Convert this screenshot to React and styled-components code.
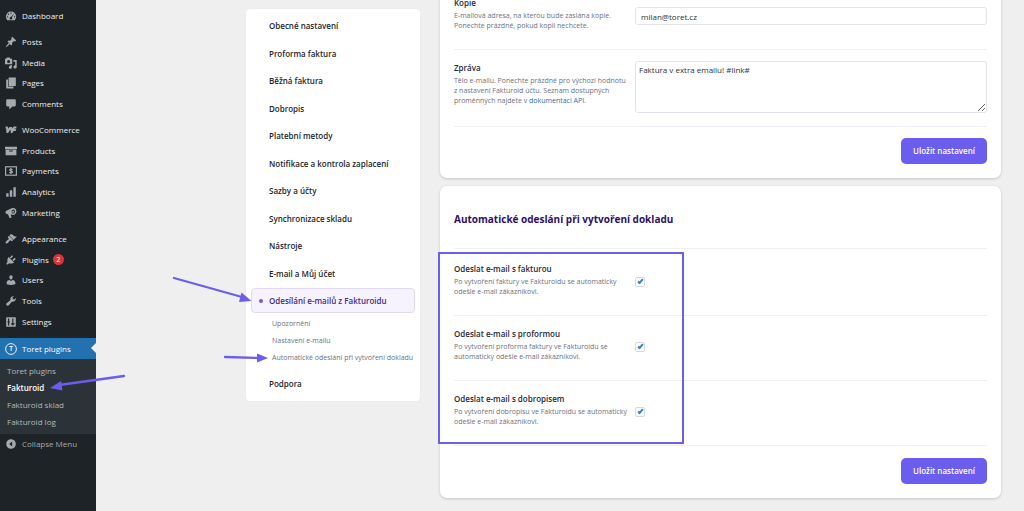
import React from "react";
import styled, { createGlobalStyle, css } from "styled-components";

const GlobalStyle = createGlobalStyle`
  *, *::before, *::after {
    box-sizing: border-box;
  }

  body {
    margin: 0;
    background: #efefef;
    color: #2c3338;
    font-family: "Open Sans", "Noto Sans", sans-serif;
    font-size: 8px;
  }

  a {
    text-decoration: none;
  }
`;

const Page = styled.div`
  position: relative;
  display: flex;
  min-height: 100vh;
  overflow: hidden;
`;

const Sidebar = styled.nav`
  flex: 0 0 96px;
  padding-top: 5px;
  background: #1d2327;
`;

const MenuGroup = styled.div`
  display: grid;
  grid-auto-rows: 1fr;
  height: ${({ $height }) => $height}px;
  margin-bottom: 6px;
`;

const MenuLink = styled.a`
  display: flex;
  align-items: center;
  gap: 5px;
  padding-left: 5px;
  line-height: 12px;
  color: #f0f0f1;

  svg {
    width: 12px;
    height: 12px;
    color: #a7aaad;
  }
`;

const CurrentLink = styled(MenuLink)`
  position: relative;
  height: 21px;
  background: #2271b1;
  color: white;

  svg {
    color: white;
  }

  &::after {
    content: "";
    position: absolute;
    right: 0;
    top: 5px;
    border: 5px solid transparent;
    border-left: 0;
    border-right-color: #efefef;
  }
`;

const CountBadge = styled.span`
  width: 11px;
  height: 11px;
  margin-left: -1px;
  border-radius: 50%;
  background: #d63638;
  color: white;
  font-size: 7px;
  line-height: 11px;
  text-align: center;
`;

const Submenu = styled.div`
  padding: 3px 0 4px;
  background: #2c3338;
`;

const SubmenuLink = styled.a`
  display: block;
  padding-left: 7px;
  line-height: 17px;
  color: ${({ $current }) => ($current ? "white" : "#b4b7ba")};
  font-weight: ${({ $current }) => ($current ? 600 : 400)};
`;

const CollapseButton = styled.button`
  display: flex;
  align-items: center;
  gap: 5px;
  width: 100%;
  height: 19px;
  padding: 0 0 0 5px;
  border: 0;
  background: none;
  color: #a7aaad;
  font: inherit;
  cursor: pointer;

  svg {
    width: 12px;
    height: 12px;
  }
`;

const Content = styled.main`
  display: flex;
  flex: 1;
  align-items: flex-start;
  gap: 20px;
  min-width: 0;
  padding: 9px 23px 0 150px;
`;

const Tabs = styled.nav`
  flex: 0 0 174px;
  padding: 4px 5px 5px;
  border-radius: 4px;
  background: white;
  box-shadow: 0 0 2px rgba(0, 0, 0, 0.05);
`;

const TabList = styled.div`
  display: flex;
  flex-direction: column;
  justify-content: space-between;
  height: 300px;
`;

const Tab = styled.a`
  display: flex;
  align-items: center;
  height: 25px;
  padding-left: 17px;
  border: 1px solid transparent;
  border-radius: 4px;
  color: #23262b;
  font-weight: 600;

  ${({ $active }) =>
    $active &&
    css`
      padding-left: 7px;
      border-color: #e0d8fb;
      background: #f6f3fe;
      color: #4b2a86;

      &::before {
        content: "";
        width: 4px;
        height: 4px;
        margin-right: 6px;
        border-radius: 50%;
        background: #6b5ded;
      }
    `}
`;

const SectionList = styled.div`
  display: flex;
  flex-direction: column;
  padding: 2px 0 5px 21px;
`;

const SectionLink = styled.a`
  color: #6b7280;
  font-size: 7px;
  line-height: 17px;
  white-space: nowrap;
`;

const Cards = styled.div`
  display: flex;
  flex: 1;
  flex-direction: column;
  gap: 8px;
  min-width: 0;
  margin-top: -38px;
`;

const Card = styled.section`
  padding: 14px;
  border-radius: 7px;
  background: white;
  box-shadow: 0 1px 3px rgba(0, 0, 0, 0.18);
`;

const CardTitle = styled.h2`
  margin: 0;
  padding: 12px 0 21px;
  border-bottom: 1px solid #eeeff1;
  color: #2f0f68;
  font-size: 10px;
  font-weight: 700;
  line-height: 15px;
`;

const Rows = styled.div`
  position: relative;
  padding: 2px 0 1px;
`;

const FieldRow = styled.div`
  display: grid;
  grid-template-columns: 169px 1fr;
  align-items: center;
  gap: 12px;
  padding: 11px 0 13px;
  border-bottom: 1px solid #eeeff1;
`;

const FieldText = styled.div`
  align-self: start;
`;

const FieldLabel = styled.label`
  display: block;
  color: #1f2937;
  font-weight: 600;
  line-height: 14px;
`;

const Hint = styled.p`
  margin: 1px 0 5px;
  color: #6b7280;
  font-size: 7px;
  line-height: 10px;
  white-space: nowrap;

  a {
    color: #2271b1;
  }
`;

const controlStyles = css`
  display: block;
  width: 100%;
  border: 1px solid #e3e4ea;
  border-radius: 3px;
  outline: 0;
  background: white;
  color: #2c3338;
  font: inherit;
`;

const TextInput = styled.input`
  ${controlStyles}
  height: 18px;
  padding: 0 5px;
`;

const TextArea = styled.textarea`
  ${controlStyles}
  height: 52px;
  padding: 2px 3px;
  line-height: 12px;
  resize: vertical;
`;

const Checkbox = styled.input`
  position: relative;
  appearance: none;
  width: 10px;
  height: 10px;
  margin: 0;
  border: 1px solid #d5d9e1;
  border-radius: 2px;
  background: white;

  &:checked::before {
    content: "";
    position: absolute;
    left: 3px;
    top: 0;
    width: 3px;
    height: 6px;
    border: solid #3582c4;
    border-width: 0 2px 2px 0;
    transform: rotate(42deg);
  }
`;

const CardFooter = styled.div`
  display: flex;
  justify-content: flex-end;
  padding-top: 11px;
`;

const SaveButton = styled.button`
  width: 86px;
  height: 26px;
  padding: 0 0 2px;
  border: 0;
  border-radius: 5px;
  background: #6b5ded;
  color: white;
  font: inherit;
  font-weight: 600;
  cursor: pointer;
`;

const Highlight = styled.div`
  position: absolute;
  top: 3px;
  bottom: 3px;
  left: -16px;
  width: 246px;
  border: 2px solid #6b5ded;
  pointer-events: none;
`;

const Arrows = styled.svg`
  position: absolute;
  top: 0;
  left: 0;
  pointer-events: none;
`;

const Icon = ({ children }) => (
  <svg viewBox="0 0 20 20" fill="currentColor" aria-hidden="true">
    {children}
  </svg>
);

const icons = {
  dashboard: (
    <Icon>
      <path
        fillRule="evenodd"
        d="M3.800 17h12.400A8.600 8.600 0 0 0 18.500 11a8.500 8.500 0 0 0-17 0c0 2.400.900 4.400 2.300 6zM10 4.200a1.100 1.100 0 1 1 0 2.200 1.100 1.100 0 0 1 0-2.200zM5.600 6a1.100 1.100 0 1 1 0 2.200 1.100 1.100 0 0 1 0-2.200zM4 10.300a1.100 1.100 0 1 1 0 2.200 1.100 1.100 0 0 1 0-2.200zm12 0a1.100 1.100 0 1 1 0 2.200 1.100 1.100 0 0 1 0-2.200zM15 6l-3.400 6.400a2.200 2.200 0 1 1-1.600-.900z"
      />
    </Icon>
  ),
  posts: (
    <Icon>
      <path d="M10.440 3.020l1.820-1.820 6.360 6.350-1.830 1.820c-1.050-.680-2.480-.570-3.410.360l-.750.750c-.920.930-1.040 2.350-.350 3.410l-1.830 1.820-2.410-2.410-2.800 2.790c-.420.420-3.380 2.710-3.800 2.290s1.860-3.390 2.280-3.810l2.790-2.790L4.100 9.360l1.830-1.820c1.050.690 2.480.570 3.400-.360l.750-.750c.930-.920 1.050-2.350.360-3.410z" />
    </Icon>
  ),
  media: (
    <Icon>
      <path
        fillRule="evenodd"
        d="M0 3h2l1-2h5l1 2h3v9H0zm6 2a2.500 2.500 0 1 0 0 5 2.500 2.500 0 0 0 0-5zM14 5h5.500v11.500a2.700 2.700 0 1 1-2.500-2.600V8h-3zM11.500 13.500V17A2.600 2.600 0 1 1 9 14.500v-1z"
      />
    </Icon>
  ),
  pages: (
    <Icon>
      <path d="M6 15V1h12v14zm-1 1h9v3H2V4h3z" />
    </Icon>
  ),
  comments: (
    <Icon>
      <path d="M4 2h12c1.100 0 2 .900 2 2v8c0 1.100-.900 2-2 2h-3.500L7 19v-5H4c-1.100 0-2-.900-2-2V4c0-1.100.900-2 2-2z" />
    </Icon>
  ),
  woo: (
    <Icon>
      <path
        d="M1 6h2.500l.5 7.500L8.500 6.500h2l.8 7L15 6h4M14.500 10h3.500"
        fill="none"
        stroke="currentColor"
        strokeWidth="3.400"
        strokeLinejoin="round"
      />
    </Icon>
  ),
  products: (
    <Icon>
      <path fillRule="evenodd" d="M0 3h20v4H0zm1 5h18v9H1zm6 1v2h6V9z" />
    </Icon>
  ),
  payments: (
    <Icon>
      <rect x="1" y="3" width="18" height="14" fill="none" stroke="currentColor" strokeWidth="2" />
      <path
        d="M12.500 8c-.5-1-4.500-1.500-4.500.3 0 2 4.500 1 4.500 3.200 0 2-4.200 1.700-5 .3M10 5v10"
        fill="none"
        stroke="currentColor"
        strokeWidth="2"
      />
    </Icon>
  ),
  analytics: (
    <Icon>
      <path d="M14 2h4v16h-4zM8 7h4v11H8zm-6 5h4v6H2z" />
    </Icon>
  ),
  marketing: (
    <Icon>
      <path
        fillRule="evenodd"
        d="M11 2c4.500-1.500 8.500 1.500 8 6C18.500 12 15 14 12 13l-2.500-.5 1.500 5.500-3.500.5L5 12l-2.500-.5C.5 10 .3 8 1.500 6.500zm2.500 2c-3.200 1-3.200 6.500 0 7 3.500-.5 4.500-6.500 0-7z"
      />
      <circle cx="13.500" cy="7.800" r="1.600" />
    </Icon>
  ),
  appearance: (
    <Icon>
      <path d="M14.480 11.060L7.410 3.990l1.500-1.500c.500-.560 2.300-.470 3.510.320 1.210.800 1.430 1.280 2.910 2.100 1.180.640 2.450 1.260 4.450.850zm-.710.710L6.700 4.700 4.930 6.470c-.390.390-.390 1.020 0 1.410l1.060 1.060c.390.390.390 1.030 0 1.420-.600.600-1.430 1.110-2.210 1.690-.350.260-.700.530-1.010.840C1.430 14.230.400 16.080 1.400 17.070c.990 1 2.840-.030 4.180-1.360.310-.310.580-.660.850-1.020.570-.780 1.080-1.610 1.690-2.210.390-.390 1.020-.390 1.410 0l1.060 1.060c.390.390 1.020.390 1.410 0z" />
    </Icon>
  ),
  plugins: (
    <Icon>
      <path d="M13.110 4.360L9.870 7.600 8 5.730l3.240-3.240c.350-.340 1.050-.200 1.560.320.520.510.660 1.210.310 1.550zm-8 1.770l.910-1.120 9.010 9.010-1.190.840c-.710.710-2.630 1.160-3.820 1.160H6.140L4.900 17.260c-.590.590-1.540.590-2.120 0-.590-.580-.590-1.530 0-2.120l1.240-1.240v-3.880c0-1.130.400-3.190 1.090-3.890zm7.260 3.970l3.240-3.240c.340-.350 1.040-.210 1.550.310.520.510.660 1.210.310 1.550l-3.240 3.250z" />
    </Icon>
  ),
  users: (
    <Icon>
      <path d="M10 9.250c-2.270 0-2.730-3.440-2.730-3.440C7 4.020 7.820 2 9.970 2c2.160 0 2.980 2.020 2.710 3.810 0 0-.410 3.440-2.680 3.440zm0 2.570L12.720 10c2.390 0 4.520 2.330 4.520 4.530v2.490s-3.650 1.130-7.240 1.130c-3.650 0-7.240-1.130-7.240-1.130v-2.490c0-2.250 1.940-4.480 4.470-4.480z" />
    </Icon>
  ),
  tools: (
    <Icon>
      <path d="M16.680 9.770c-1.340 1.340-3.300 1.670-4.950.990l-5.410 6.520c-.990.990-2.590.990-3.580 0s-.990-2.590 0-3.570l6.520-5.420c-.680-1.650-.350-3.610.990-4.950 1.280-1.280 3.120-1.620 4.720-1.060l-2.890 2.890 2.820 2.820 2.860-2.870c.530 1.580.180 3.390-1.080 4.650z" />
    </Icon>
  ),
  settings: (
    <Icon>
      <path
        fillRule="evenodd"
        d="M3 2h14c.600 0 1 .400 1 1v14c0 .600-.400 1-1 1H3c-.600 0-1-.400-1-1V3c0-.600.400-1 1-1zm2 2v5H4v2h1v5h2v-5h1V9H7V4zm7 0v8h-2v2h2v2h2v-2h2v-2h-2V4z"
      />
    </Icon>
  ),
  toret: (
    <Icon>
      <circle cx="10" cy="10" r="9" fill="none" stroke="currentColor" strokeWidth="1.500" />
      <text x="10" y="14" fontSize="11" fontWeight="600" textAnchor="middle">
        T
      </text>
    </Icon>
  ),
  collapse: (
    <Icon>
      <path fillRule="evenodd" d="M10 2a8 8 0 1 1 0 16 8 8 0 0 1 0-16zm2 4l-5 4 5 4z" />
    </Icon>
  )
};

const menuGroups = [
  { height: 21, items: [["dashboard", "Dashboard"]] },
  {
    height: 82,
    items: [
      ["posts", "Posts"],
      ["media", "Media"],
      ["pages", "Pages"],
      ["comments", "Comments"]
    ]
  },
  {
    height: 103,
    items: [
      ["woo", "WooCommerce"],
      ["products", "Products"],
      ["payments", "Payments"],
      ["analytics", "Analytics"],
      ["marketing", "Marketing"]
    ]
  },
  {
    height: 103,
    items: [
      ["appearance", "Appearance"],
      ["plugins", "Plugins", 2],
      ["users", "Users"],
      ["tools", "Tools"],
      ["settings", "Settings"]
    ]
  }
];

const submenu = ["Toret plugins", "Fakturoid", "Fakturoid sklad", "Fakturoid log"];

const tabs = [
  "Obecné nastavení",
  "Proforma faktura",
  "Běžná faktura",
  "Dobropis",
  "Platební metody",
  "Notifikace a kontrola zaplacení",
  "Sazby a účty",
  "Synchronizace skladu",
  "Nástroje",
  "E-mail a Můj účet",
  "Odesílání e-mailů z Fakturoidu"
];

const sections = [
  "Upozornění",
  "Nastavení e-mailu",
  "Automatické odeslání při vytvoření dokladu"
];

const autoSend = [
  {
    id: "invoice",
    label: "Odeslat e-mail s fakturou",
    hint: ["Po vytvoření faktury ve Fakturoidu se automaticky", "odešle e-mail zákazníkovi."]
  },
  {
    id: "proforma",
    label: "Odeslat e-mail s proformou",
    hint: ["Po vytvoření proforma faktury ve Fakturoidu se", "automaticky odešle e-mail zákazníkovi."]
  },
  {
    id: "credit-note",
    label: "Odeslat e-mail s dobropisem",
    hint: ["Po vytvoření dobropisu ve Fakturoidu se automaticky", "odešle e-mail zákazníkovi."]
  }
];

const AdminMenu = () => (
  <Sidebar>
    {menuGroups.map(({ height, items }) => (
      <MenuGroup key={items[0][0]} $height={height}>
        {items.map(([icon, label, count]) => (
          <MenuLink key={icon} href="#">
            {icons[icon]}
            {label}
            {count && <CountBadge>{count}</CountBadge>}
          </MenuLink>
        ))}
      </MenuGroup>
    ))}
    <CurrentLink href="#">
      {icons.toret}
      Toret plugins
    </CurrentLink>
    <Submenu>
      {submenu.map(label => (
        <SubmenuLink key={label} href="#" $current={label === "Fakturoid"}>
          {label}
        </SubmenuLink>
      ))}
    </Submenu>
    <CollapseButton type="button">
      {icons.collapse}
      Collapse Menu
    </CollapseButton>
  </Sidebar>
);

const SettingsTabs = () => (
  <Tabs>
    <TabList>
      {tabs.map((label, index) => (
        <Tab key={label} href="#" $active={index === tabs.length - 1}>
          {label}
        </Tab>
      ))}
    </TabList>
    <SectionList>
      {sections.map(label => (
        <SectionLink key={label} href="#">
          {label}
        </SectionLink>
      ))}
    </SectionList>
    <Tab href="#">Podpora</Tab>
  </Tabs>
);

const Footer = () => (
  <CardFooter>
    <SaveButton type="button">Uložit nastavení</SaveButton>
  </CardFooter>
);

const App = () => (
  <Page>
    <GlobalStyle />
    <AdminMenu />
    <Content>
      <SettingsTabs />
      <Cards>
        <Card>
          <FieldRow>
            <FieldText>
              <FieldLabel htmlFor="copy">Kopie</FieldLabel>
              <Hint>
                E-mailová adresa, na kterou bude zaslána kopie.
                <br />
                Ponechte prázdné, pokud kopii nechcete.
              </Hint>
            </FieldText>
            <TextInput id="copy" type="email" defaultValue="milan@toret.cz" />
          </FieldRow>
          <FieldRow>
            <FieldText>
              <FieldLabel htmlFor="message">Zpráva</FieldLabel>
              <Hint>
                Tělo e-mailu. Ponechte prázdné pro výchozí hodnotu
                <br />
                z nastavení Fakturoid účtu. Seznam dostupných
                <br />
                proměnných najdete v <a href="#">dokumentaci API</a>.
              </Hint>
            </FieldText>
            <TextArea id="message" defaultValue="Faktura v extra emailu! #link#" />
          </FieldRow>
          <Footer />
        </Card>
        <Card>
          <CardTitle>Automatické odeslání při vytvoření dokladu</CardTitle>
          <Rows>
            {autoSend.map(({ id, label, hint }) => (
              <FieldRow key={id}>
                <FieldText>
                  <FieldLabel htmlFor={id}>{label}</FieldLabel>
                  <Hint>
                    {hint[0]}
                    <br />
                    {hint[1]}
                  </Hint>
                </FieldText>
                <Checkbox id={id} type="checkbox" defaultChecked />
              </FieldRow>
            ))}
            <Highlight />
          </Rows>
          <Footer />
        </Card>
      </Cards>
    </Content>
    <Arrows width="440" height="400" fill="#6b5ded" stroke="#6b5ded" strokeWidth="2.300" aria-hidden="true">
      <path d="M174 278l68 19M225 357l34 1M124 376l-65 9" strokeLinecap="round" />
      <path stroke="none" d="M251.500 301l-12.500 1 2.500-9.500zM268 358l-11 4.500v-9zM50 388l11-7 1.500 9.500z" />
    </Arrows>
  </Page>
);

export default App;
